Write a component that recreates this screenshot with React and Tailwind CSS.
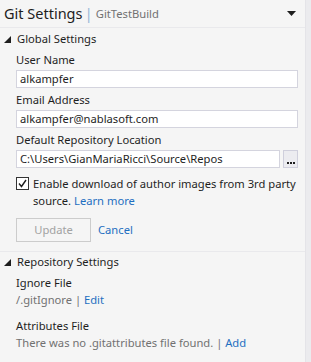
import React from "react";

function Tri() {
  return (
    <svg width="7" height="7" viewBox="0 0 7 7" className="shrink-0">
      <polygon points="7,0 7,7 0,7" fill="#1e1e1e" />
    </svg>
  );
}

function Field({ value }) {
  return (
    <div className="h-[18px] bg-white border border-[#d4d4de] flex items-center px-[3px] text-[11.2px] text-[#1e1e1e] leading-none whitespace-nowrap overflow-hidden">
      {value}
    </div>
  );
}

export default function App() {
  return (
    <div className="w-[311px] h-[362px] bg-[#f5f5f5] flex overflow-hidden font-['Noto_Sans',sans-serif] text-[11.2px] text-[#1e1e1e]">
      <div className="w-[305px] flex flex-col">
        <div className="h-[28px] flex items-center pl-[4px] pr-[9px] border-b border-[#e9e9ec]">
          <span className="text-[14.5px] leading-none text-[#1e1e1e]">Git Settings</span>
          <span className="text-[15px] leading-none text-[#9bb7d8] ml-[2px] mr-[3px]">|</span>
          <span className="text-[11.2px] leading-none text-[#717171]">GitTestBuild</span>
          <div className="flex-1" />
          <svg width="9" height="5" viewBox="0 0 9 5">
            <polygon points="0,0 9,0 4.5,5" fill="#1e1e1e" />
          </svg>
        </div>

        <div className="px-[4px] flex items-center gap-[6px] h-[22px]">
          <Tri />
          <span>Global Settings</span>
        </div>

        <div className="pl-[16px] pr-[7px] flex flex-col">
          <div className="mt-[2px] h-[16px] leading-[16px]">User Name</div>
          <div className="mt-[2px]"><Field value="alkampfer" /></div>
          <div className="mt-[4px] h-[16px] leading-[16px]">Email Address</div>
          <div className="mt-[2px]"><Field value="alkampfer@nablasoft.com" /></div>
          <div className="mt-[4px] h-[16px] leading-[16px]">Default Repository Location</div>
          <div className="mt-[2px] flex gap-[3px]">
            <div className="flex-1 min-w-0"><Field value="C:\Users\GianMariaRicci\Source\Repos" /></div>
            <div className="w-[15px] h-[18px] bg-[#ececf0] border border-[#cfcfdc] flex items-end justify-center pb-[3px] gap-[1px]">
              <span className="w-[2px] h-[2px] bg-[#1e1e1e]" />
              <span className="w-[2px] h-[2px] bg-[#1e1e1e]" />
              <span className="w-[2px] h-[2px] bg-[#1e1e1e]" />
            </div>
          </div>
          <div className="mt-[7px] flex gap-[4px] items-start">
            <div className="w-[13px] h-[13px] mt-[2px] bg-white border border-[#333] flex items-center justify-center shrink-0">
              <svg width="9" height="9" viewBox="0 0 9 9">
                <polyline points="1,4.5 3.5,7.5 8,1" fill="none" stroke="#1e1e1e" strokeWidth="1.4" />
              </svg>
            </div>
            <div className="leading-[17px]">
              Enable download of author images from 3rd party source. <span className="text-[#1e6fc1]">Learn more</span>
            </div>
          </div>
          <div className="mt-[9px] flex items-center gap-[7px]">
            <div className="w-[75px] h-[24px] border border-[#cccccc] flex items-center justify-center text-[#a2a2a2]">Update</div>
            <span className="text-[#1e6fc1]">Cancel</span>
          </div>
        </div>

        <div className="mt-[9px] border-t border-[#e9e9ec]" />
        <div className="px-[4px] flex items-center gap-[6px] h-[20px]">
          <Tri />
          <span>Repository Settings</span>
        </div>
        <div className="pl-[16px] flex flex-col">
          <div className="mt-[3px] h-[16px] leading-[16px]">Ignore File</div>
          <div className="mt-[1px] h-[16px] leading-[16px] text-[#717171]">
            /.gitIgnore | <span className="text-[#1e6fc1]">Edit</span>
          </div>
          <div className="mt-[10px] h-[16px] leading-[16px]">Attributes File</div>
          <div className="mt-[1px] h-[16px] leading-[16px] text-[#717171]">
            There was no .gitattributes file found. | <span className="text-[#1e6fc1]">Add</span>
          </div>
        </div>
      </div>
      <div className="w-[6px] h-full bg-[#ebebee] border-l border-[#e4e4e8]" />
    </div>
  );
}
